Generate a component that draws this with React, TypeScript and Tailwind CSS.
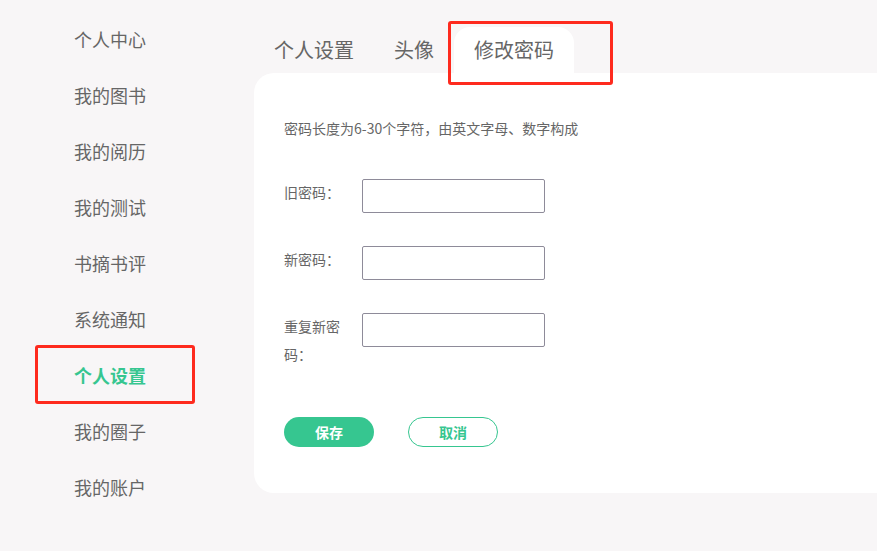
import React from 'react';

const menu = ['个人中心', '我的图书', '我的阅历', '我的测试', '书摘书评', '系统通知', '个人设置', '我的圈子', '我的账户'];
const tabs = ['个人设置', '头像', '修改密码'];

const fields = [
  { label: '旧密码：' },
  { label: '新密码：' },
  { label: '重复新密码：' },
];

export default function App() {
  const activeMenu = '个人设置';
  const activeTab = '修改密码';

  return (
    <div
      className="flex w-full h-[551px] overflow-hidden bg-[#f8f6f7]"
      style={{ fontFamily: '"Noto Sans CJK SC", "Microsoft YaHei", sans-serif' }}
    >
      {/* 左侧菜单 */}
      <div className="w-[254px] shrink-0 pt-[11px]">
        {menu.map((item) => {
          const isActive = item === activeMenu;
          return (
            <div key={item} className="relative h-[56px] flex items-center pl-[74px]">
              <span
                className={`text-[18px] leading-none ${
                  isActive ? 'text-[#36c690] font-bold' : 'text-[#666666]'
                }`}
              >
                {item}
              </span>
              {isActive && (
                <div className="absolute left-[35px] top-[-2px] w-[160px] h-[59px] border-[3px] border-[#fe2a1e] rounded-[3px]" />
              )}
            </div>
          );
        })}
      </div>

      {/* 右侧内容 */}
      <div className="flex-1 pt-[27px]">
        <div className="flex">
          {tabs.map((tab) => {
            const isActive = tab === activeTab;
            return (
              <div
                key={tab}
                className={`relative h-[46px] px-[20px] flex items-center text-[20px] text-[#666666] ${
                  isActive ? 'bg-white rounded-t-[16px]' : ''
                }`}
              >
                {tab}
                {isActive && (
                  <div className="absolute left-[-6px] top-[-6px] w-[165px] h-[64px] border-[3px] border-[#fe2a1e] rounded-[3px]" />
                )}
              </div>
            );
          })}
        </div>

        <div className="w-[680px] bg-white rounded-[20px] pt-[45px] pl-[30px] pb-[46px]">
          <p className="text-[14px] leading-[20px] text-[#666666]">
            密码长度为6-30个字符，由英文字母、数字构成
          </p>

          <div className="mt-[41px] flex flex-col gap-[33px]">
            {fields.map((f) => (
              <div key={f.label} className="flex items-start">
                <label className="w-[64px] mr-[14px] text-[14px] leading-[28px] text-[#666666] -mt-[1px]">
                  {f.label}
                </label>
                <input
                  type="password"
                  className="w-[183px] h-[34px] border border-[#8e8b99] rounded-[2px] outline-none px-2 text-sm"
                />
              </div>
            ))}
          </div>

          <div className="mt-[49px] flex items-center gap-[34px]">
            <button className="w-[90px] h-[30px] rounded-full bg-[#36c690] text-white text-[14px] font-bold">
              保存
            </button>
            <button className="w-[90px] h-[30px] rounded-full border border-[#36c690] bg-white text-[#36c690] text-[14px] font-bold">
              取消
            </button>
          </div>
        </div>
      </div>
    </div>
  );
}
